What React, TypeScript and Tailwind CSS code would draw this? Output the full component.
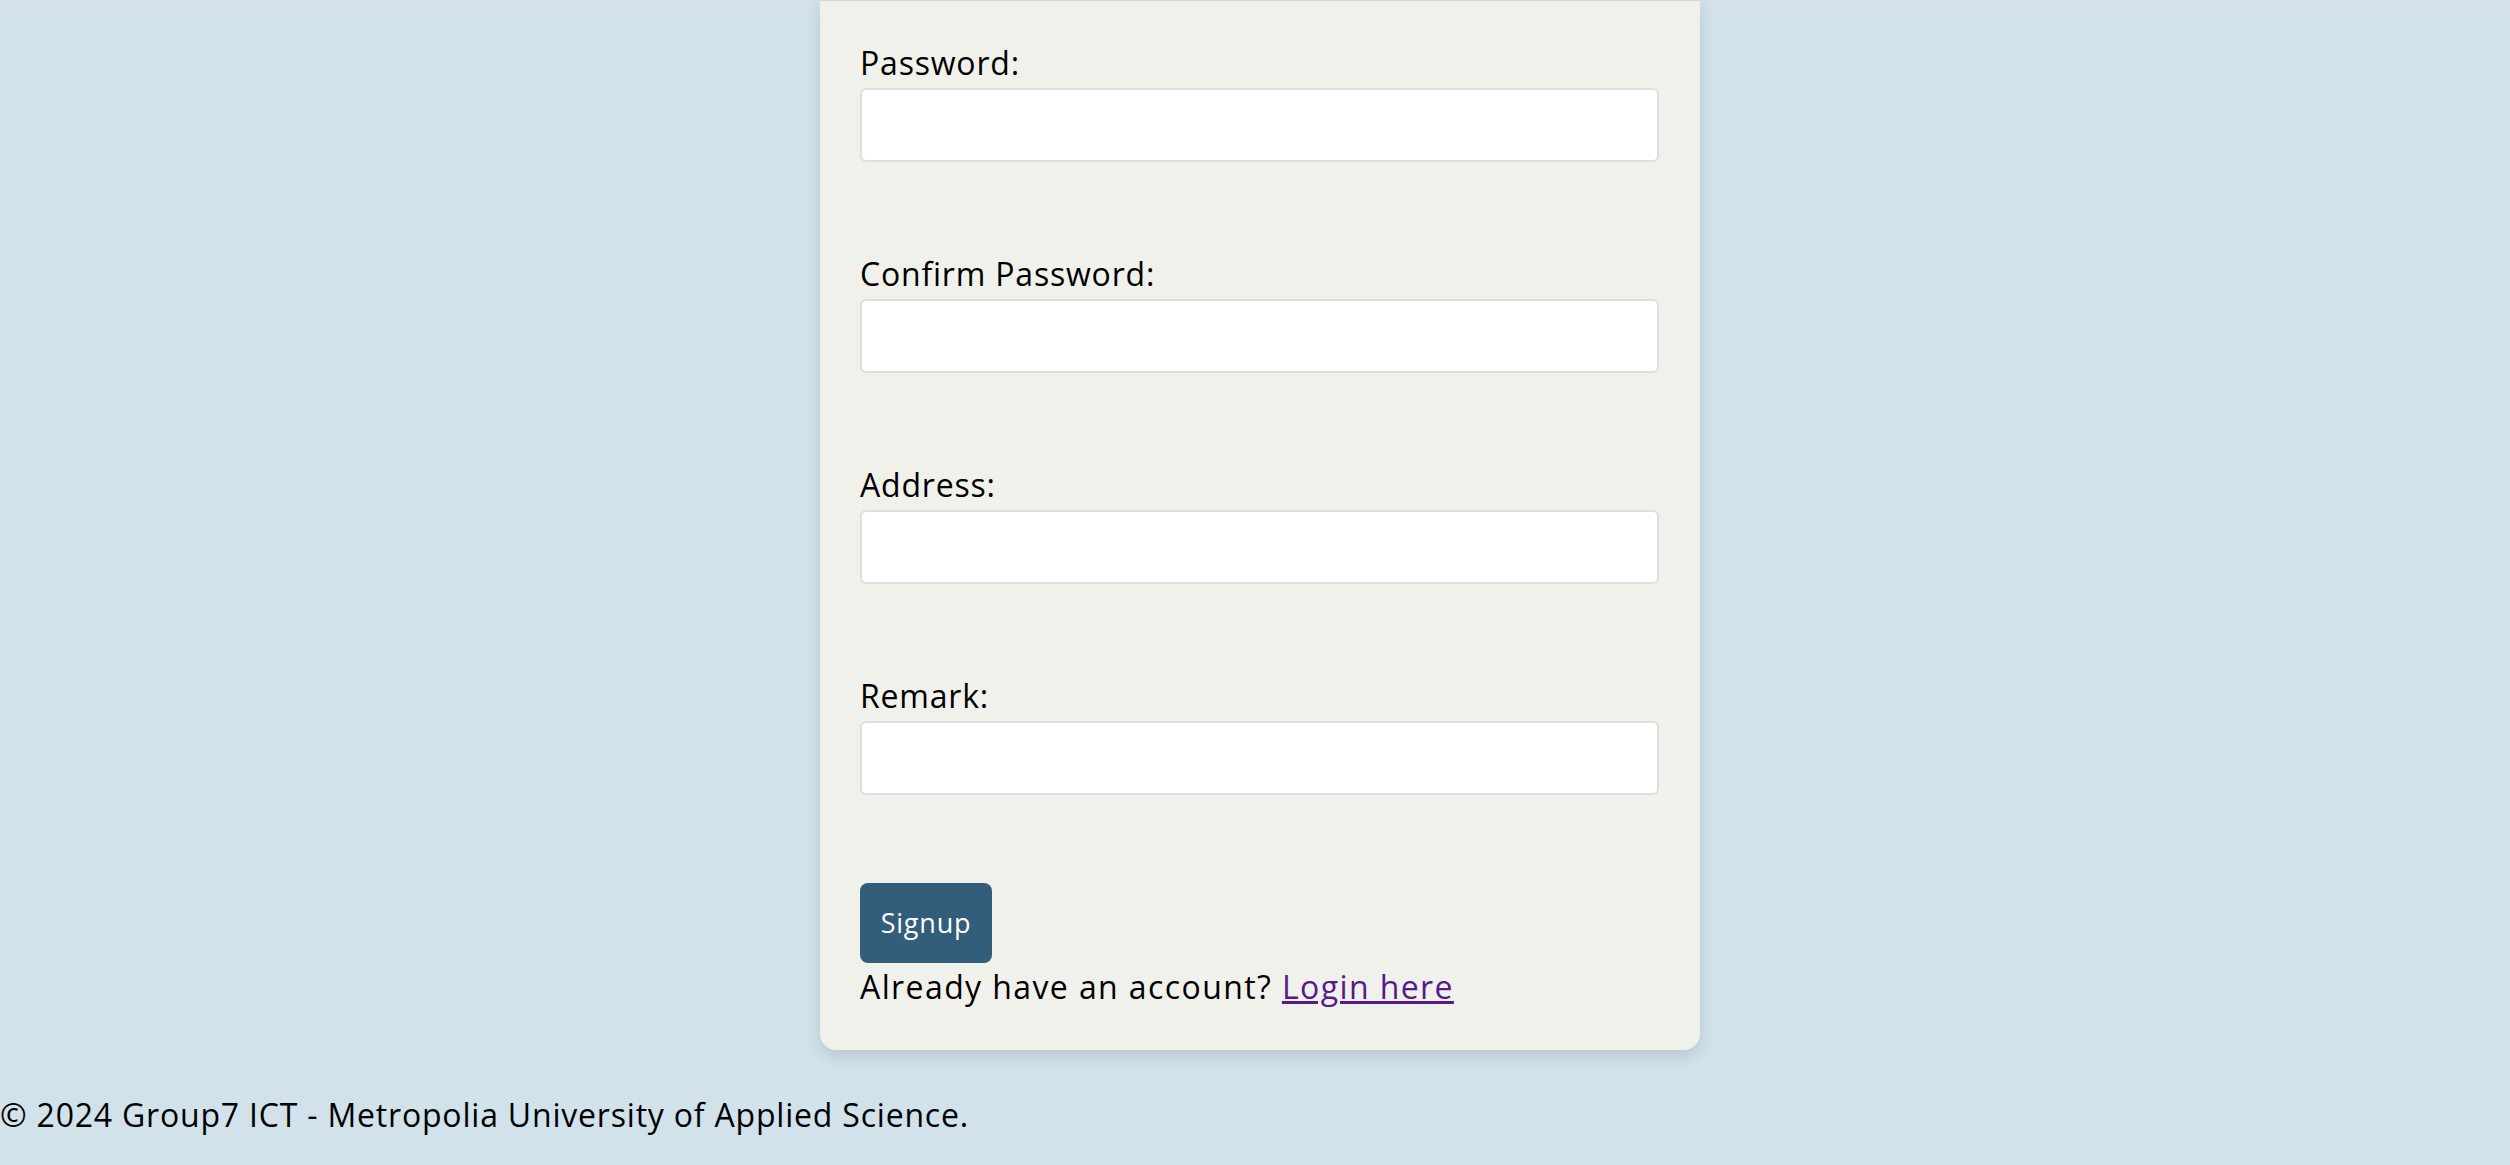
import React from "react";

const fields = ["Password:", "Confirm Password:", "Address:", "Remark:"];

export default function App() {
  return (
    <div
      className="min-h-screen bg-[#d1e2eb] text-black tracking-[0.8px]"
      style={{ fontFamily: '"Open Sans", "Noto Sans", sans-serif' }}
    >
      <div className="h-px bg-[#dcdcdc]" />
      <div className="flex justify-center pl-[10px]">
        <div className="w-[880px] bg-[#f1f1ec] rounded-b-[16px] shadow-[0_6px_16px_rgba(0,0,0,0.12)] px-[40px] pt-[38px] pb-[39px]">
          {fields.map((f, i) => (
            <div key={f} className={i === 0 ? "" : "mt-[88px]"}>
              <label className="block h-[48px] text-[32px] leading-[48px]">{f}</label>
              <input
                type={f.includes("Password") ? "password" : "text"}
                className="mt-px block h-[74px] w-[799px] rounded-[6px] border-2 border-[#dedede] bg-white outline-none"
              />
            </div>
          ))}
          <button className="mt-[88px] block h-[80px] w-[132px] rounded-[8px] bg-[#325d7b] text-[27px] text-white">
            Signup
          </button>
          <p className="h-[48px] text-[32px] leading-[48px] tracking-[1.4px]">
            Already have an account?{" "}
            <a href="#" className="text-[#551a8b] underline">
              Login here
            </a>
          </p>
        </div>
      </div>
      <footer className="mt-[41px] h-[48px] text-[32px] leading-[48px]">
        © 2024 Group7 ICT - Metropolia University of Applied Science.
      </footer>
    </div>
  );
}
